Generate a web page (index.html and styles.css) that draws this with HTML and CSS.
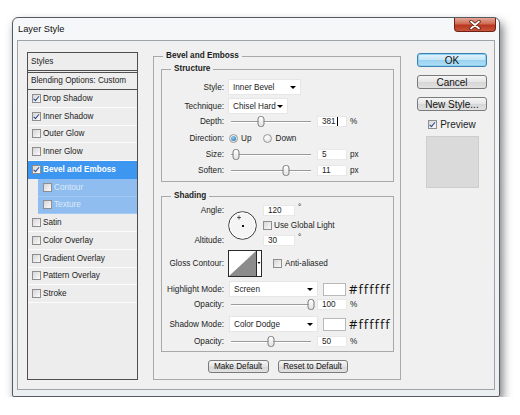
FILE: index.html
```html
<!DOCTYPE html>
<html lang="en">
<head>
    <meta charset="UTF-8">
    <title>Layer Style</title>
    <link rel="stylesheet" href="styles.css">
</head>
<body>
<div class="window">
    <div class="titlebar">
        <span class="title">Layer Style</span>
        <span class="close">
            <svg width="14" height="10" viewBox="0 0 14 10">
                <path d="M3 1.5 L11 8.5 M11 1.5 L3 8.5" stroke="#5a1a10" stroke-width="3.4" stroke-linecap="round"/>
                <path d="M3 1.5 L11 8.5 M11 1.5 L3 8.5" stroke="#fff" stroke-width="1.8" stroke-linecap="round"/>
            </svg>
        </span>
    </div>

    <div class="client">
        <div class="styles-list">
            <div class="list-head">Styles</div>
            <div class="list-blend">Blending Options: Custom</div>
            <div class="item"><span class="cb on"></span>Drop Shadow</div>
            <div class="item"><span class="cb on"></span>Inner Shadow</div>
            <div class="item"><span class="cb"></span>Outer Glow</div>
            <div class="item"><span class="cb"></span>Inner Glow</div>
            <div class="item active"><span class="cb on"></span>Bevel and Emboss</div>
            <div class="item child"><span class="cb"></span>Contour</div>
            <div class="item child"><span class="cb"></span>Texture</div>
            <div class="item"><span class="cb"></span>Satin</div>
            <div class="item"><span class="cb"></span>Color Overlay</div>
            <div class="item"><span class="cb"></span>Gradient Overlay</div>
            <div class="item"><span class="cb"></span>Pattern Overlay</div>
            <div class="item"><span class="cb"></span>Stroke</div>
        </div>

        <fieldset class="group main">
            <legend>Bevel and Emboss</legend>

            <fieldset class="group inner">
                <legend>Structure</legend>
                <div class="row tall">
                    <span class="lbl">Style:</span>
                    <div class="select style-sel">Inner Bevel</div>
                </div>
                <div class="row tall">
                    <span class="lbl">Technique:</span>
                    <div class="select tech-sel">Chisel Hard</div>
                </div>
                <div class="row depth">
                    <span class="lbl">Depth:</span>
                    <div class="slider"><span class="thumb" style="left: 38%"></span></div>
                    <span class="field">381<span class="caret"></span></span>
                    <span class="unit">%</span>
                </div>
                <div class="row direction">
                    <span class="lbl">Direction:</span>
                    <span class="radio on"></span><span class="opt">Up</span>
                    <span class="radio"></span><span class="opt">Down</span>
                </div>
                <div class="row">
                    <span class="lbl">Size:</span>
                    <div class="slider"><span class="thumb" style="left: 6%"></span></div>
                    <span class="field">5</span>
                    <span class="unit">px</span>
                </div>
                <div class="row">
                    <span class="lbl">Soften:</span>
                    <div class="slider"><span class="thumb" style="left: 69%"></span></div>
                    <span class="field">11</span>
                    <span class="unit">px</span>
                </div>
            </fieldset>

            <fieldset class="group inner shading">
                <legend>Shading</legend>
                <div class="angle-block">
                    <span class="lbl angle-lbl">Angle:</span>
                    <svg class="dial" width="29" height="29" viewBox="0 0 29 29">
                        <circle cx="14.5" cy="14.5" r="13.8" fill="#f4f4f4" stroke="#3b3b3b" stroke-width="1"/>
                        <circle cx="14.5" cy="14.5" r="12.6" fill="none" stroke="#ffffff" stroke-width="1"/>
                        <path d="M11 4.5 V8.5 M9 6.5 H13" stroke="#333" stroke-width="0.8"/>
                        <rect x="14" y="14" width="2" height="2" fill="#111"/>
                    </svg>
                    <span class="afield angle-f"><span class="field short">120</span><span class="deg">°</span></span>
                    <span class="afield global-f"><span class="cb"></span>Use Global Light</span>
                    <span class="lbl alt-lbl">Altitude:</span>
                    <span class="afield alt-f"><span class="field short">30</span><span class="deg">°</span></span>
                </div>

                <div class="row gloss">
                    <span class="lbl">Gloss Contour:</span>
                    <svg class="contour" width="34" height="27" viewBox="0 0 34 27">
                        <rect x="0.5" y="0.5" width="33" height="26" fill="#fff" stroke="#2a2a2a"/>
                        <polygon points="1,26 28,1 28,26" fill="#8c8c8c"/>
                        <path d="M28.5 0 V27" stroke="#2a2a2a"/>
                        <polygon points="29.5,12 32.5,12 31,14" fill="#000"/>
                    </svg>
                    <span class="cb anti"></span><span class="opt">Anti-aliased</span>
                </div>

                <div class="row tall mode">
                    <span class="lbl">Highlight Mode:</span>
                    <div class="select mode-sel">Screen</div>
                    <span class="swatch"></span>
                    <span class="hex">#ffffff</span>
                </div>
                <div class="row opacity1">
                    <span class="lbl">Opacity:</span>
                    <div class="slider"><span class="thumb" style="left: 100%"></span></div>
                    <span class="field">100</span>
                    <span class="unit">%</span>
                </div>
                <div class="row tall mode shadow">
                    <span class="lbl">Shadow Mode:</span>
                    <div class="select mode-sel">Color Dodge</div>
                    <span class="swatch"></span>
                    <span class="hex">#ffffff</span>
                </div>
                <div class="row">
                    <span class="lbl">Opacity:</span>
                    <div class="slider"><span class="thumb" style="left: 50%"></span></div>
                    <span class="field">50</span>
                    <span class="unit">%</span>
                </div>
            </fieldset>

            <div class="btn-row">
                <span class="btn small make">Make Default</span>
                <span class="btn small reset">Reset to Default</span>
            </div>
        </fieldset>

        <div class="side">
            <span class="btn ok">OK</span>
            <span class="btn">Cancel</span>
            <span class="btn">New Style...</span>
            <div class="preview"><span class="cb on"></span>Preview</div>
            <div class="thumbnail"></div>
        </div>
    </div>
</div>
</body>
</html>
```

FILE: styles.css
```css
body {
    margin: 0;
    background: #fff;
    font-family: "Liberation Sans", Arial, sans-serif;
    font-size: 8.2px;
    color: #1c1c1c;
}

/* window frame */
.window {
    margin: 17px 0 0 12px;
    width: 488px;
    height: 380px;
    box-sizing: border-box;
    border: 1px solid #565b62;
    border-radius: 6px 6px 2px 2px;
    background: linear-gradient(#f6f7f9, #eceff2);
    box-shadow: 3px 5px 10px rgba(0, 0, 0, 0.5);
    padding: 0 4px 6px 4px;
    display: flex;
    flex-direction: column;
}
.titlebar {
    height: 22px;
    display: flex;
    justify-content: space-between;
    flex: none;
}
.title {
    padding-left: 1px;
    font-size: 9.3px;
    line-height: 22px;
    color: #111;
}
.close {
    width: 42px;
    height: 14px;
    margin-right: -1px;
    box-sizing: border-box;
    border: 1px solid #6e2316;
    border-top: none;
    border-radius: 0 0 4px 4px;
    background: linear-gradient(#e4a796, #cf6a52 45%, #b8361f 55%, #c9543c);
    display: flex;
    align-items: center;
    justify-content: center;
}
.client {
    flex: 1;
    border: 1px solid #9ea3a8;
    background: #f0f0f0;
    display: flex;
    align-items: flex-start;
    padding: 11px 0 0 9px;
}

/* left style list */
.styles-list {
    width: 111px;
    height: 328px;
    box-sizing: border-box;
    border: 1px solid #4f4f4f;
    background: #ededed;
    flex: none;
}
.list-head {
    height: 20px;
    box-sizing: border-box;
    border-bottom: 3px double #4f4f4f;
    padding-left: 3px;
    line-height: 17px;
}
.list-blend {
    height: 17px;
    box-sizing: border-box;
    border-bottom: 1px solid #4f4f4f;
    padding-left: 3px;
    line-height: 16px;
}
.item {
    height: 17.75px;
    box-sizing: border-box;
    border-bottom: 1px solid #fbfbfb;
    display: flex;
    align-items: center;
    padding-left: 4px;
}
.item .cb {
    margin-right: 2px;
}
.item.active {
    background: #3d96ef;
    color: #fff;
    font-weight: bold;
    border-bottom-color: #3d96ef;
}
.item.child {
    margin-left: 10px;
    padding-left: 5px;
    background: #90bdf0;
    color: #dce9f8;
    border-bottom-color: #a3c8f2;
}

/* checkboxes and radios */
.cb {
    display: inline-block;
    width: 9px;
    height: 9px;
    box-sizing: border-box;
    border: 1px solid #8e8e8e;
    background: linear-gradient(135deg, #d6d6d6, #fafafa);
    position: relative;
    flex: none;
}
.cb.on::after {
    content: "";
    position: absolute;
    left: 2px;
    top: 0;
    width: 2px;
    height: 4.5px;
    border: solid #26418a;
    border-width: 0 1.4px 1.4px 0;
    transform: rotate(40deg);
}
.radio {
    display: inline-block;
    width: 9px;
    height: 9px;
    box-sizing: border-box;
    border-radius: 50%;
    border: 1px solid #9a9a9a;
    background: radial-gradient(circle at 40% 35%, #fff, #d8d8d8);
    position: relative;
    flex: none;
}
.radio.on::after {
    content: "";
    position: absolute;
    left: 1px;
    top: 1px;
    width: 5px;
    height: 5px;
    border-radius: 50%;
    background: radial-gradient(circle at 40% 35%, #8fd0f5, #1a6aa6);
}

/* group boxes */
.group {
    margin: 0;
    padding: 0;
    border: 1px solid #a9a9a9;
    min-width: 0;
    box-sizing: border-box;
}
.group legend {
    padding: 0 3px;
    font-weight: bold;
    line-height: 10px;
}
.main {
    width: 248px;
    margin: -1px 0 0 15px;
    padding: 3px 6px 6px 7px;
    flex: none;
}
.main > legend {
    margin-left: 2px;
}
.inner {
    padding: 5px 0 4px 0;
}
.inner > legend {
    margin-left: 9px;
}
.shading {
    margin-top: 9px;
    padding: 4px 0 3px 0;
}

/* form rows */
.row {
    display: flex;
    align-items: center;
    height: 13px;
}
.row + .row {
    margin-top: 3px;
}
.row.tall {
    height: 16px;
}
.row.depth {
    margin-top: 1px;
}
.row.direction {
    margin-top: 4px;
}
.lbl {
    width: 62px;
    margin-right: 4px;
    text-align: right;
    flex: none;
}
.select {
    height: 16px;
    box-sizing: border-box;
    background: #fff;
    border: 1px solid #e6e6e6;
    padding: 0 4px 0 4px;
    display: flex;
    align-items: center;
    justify-content: space-between;
}
.select::after {
    content: "";
    border-left: 3px solid transparent;
    border-right: 3px solid transparent;
    border-top: 3px solid #000;
}
.style-sel {
    width: 73px;
}
.tech-sel {
    width: 60px;
}
.mode-sel {
    width: 89px;
    margin-left: 1px;
}
.slider {
    position: relative;
    width: 80px;
    height: 11px;
    margin: 0 6px 0 3px;
    flex: none;
}
.slider::before {
    content: "";
    position: absolute;
    left: 0;
    right: 0;
    top: 5px;
    height: 1px;
    background: #9a9a9a;
    box-shadow: 0 1px 0 #fff;
}
.thumb {
    position: absolute;
    top: 0;
    width: 7px;
    height: 11px;
    box-sizing: border-box;
    transform: translateX(-50%);
    border: 1px solid #7d7d7d;
    border-radius: 3px;
    background: linear-gradient(#ffffff, #e2e2e2);
}
.field {
    width: 30px;
    height: 11px;
    box-sizing: border-box;
    background: #fff;
    border: 1px solid #e8e8e8;
    padding-left: 4px;
    line-height: 9px;
    flex: none;
    display: flex;
    align-items: center;
}
.field.short {
    width: 32px;
}
.caret {
    width: 1px;
    height: 9px;
    background: #000;
    margin-left: 1px;
}
.unit {
    margin-left: 3px;
}
.opt {
    margin: 0 4px 0 3px;
}
.direction .radio {
    margin-left: 1px;
}
.direction .opt + .radio {
    margin-left: 8px;
}

/* angle + altitude block */
.angle-block {
    display: grid;
    grid-template-columns: 62px 31px 1fr;
    grid-template-rows: 11px 10px 11px;
    column-gap: 4px;
    row-gap: 4.5px;
    align-items: center;
}
.angle-lbl {
    grid-column: 1;
    grid-row: 1;
    margin: 0;
}
.alt-lbl {
    grid-column: 1;
    grid-row: 3;
    margin: 0;
}
.dial {
    grid-column: 2;
    grid-row: 1 / 4;
}
.afield {
    grid-column: 3;
    display: flex;
    align-items: center;
}
.angle-f {
    grid-row: 1;
}
.global-f {
    grid-row: 2;
}
.global-f .cb {
    margin-right: 2px;
}
.alt-f {
    grid-row: 3;
}
.deg {
    margin-left: 3px;
    align-self: flex-start;
    line-height: 6px;
}

.gloss {
    height: 27px !important;
    margin-top: 4px !important;
}
.anti {
    margin-left: 11px;
}
.gloss .opt {
    margin-left: 3px;
}
.mode {
    margin-top: 4px !important;
}
.mode.shadow {
    margin-top: 5px !important;
}
.opacity1 {
    margin-top: 1px !important;
}
.swatch {
    width: 23px;
    height: 13px;
    box-sizing: border-box;
    background: #fff;
    border: 1px solid #b9b9b9;
    margin-left: 5px;
    flex: none;
}
.hex {
    margin-left: 3px;
    font-family: "Open Sans", sans-serif;
    font-size: 13px;
    letter-spacing: 1px;
    line-height: 13px;
    color: #111;
}

/* buttons */
.btn {
    height: 14px;
    box-sizing: border-box;
    border: 1px solid #7a7a7a;
    border-radius: 3px;
    background: linear-gradient(#f6f6f6, #e4e4e4 50%, #d6d6d6 51%, #e2e2e2);
    display: flex;
    align-items: center;
    justify-content: center;
    font-size: 10px;
    color: #111;
}
.btn.ok {
    border-color: #3c7fb1;
    background: linear-gradient(#e5f4fc, #c4e5f6 50%, #98d1ef 51%, #b3dff5);
    box-shadow: inset 0 0 0 1px #8ed2f2;
}
.btn-row {
    display: flex;
    justify-content: center;
    gap: 9px;
    margin-top: 8px;
}
.btn.small {
    height: 13px;
    font-size: 8.2px;
}
.make {
    width: 61px;
}
.reset {
    width: 70px;
}
.side {
    width: 70px;
    margin: 1px 0 0 16px;
    display: flex;
    flex-direction: column;
    gap: 8px;
    flex: none;
}
.preview {
    display: flex;
    align-items: center;
    justify-content: center;
    font-size: 10px;
    height: 11px;
    gap: 3px;
}
.thumbnail {
    width: 53px;
    height: 52px;
    margin: -2px auto 0 auto;
    box-sizing: border-box;
    background: #dadada;
    border: 1px solid #cdcdcd;
}
```
